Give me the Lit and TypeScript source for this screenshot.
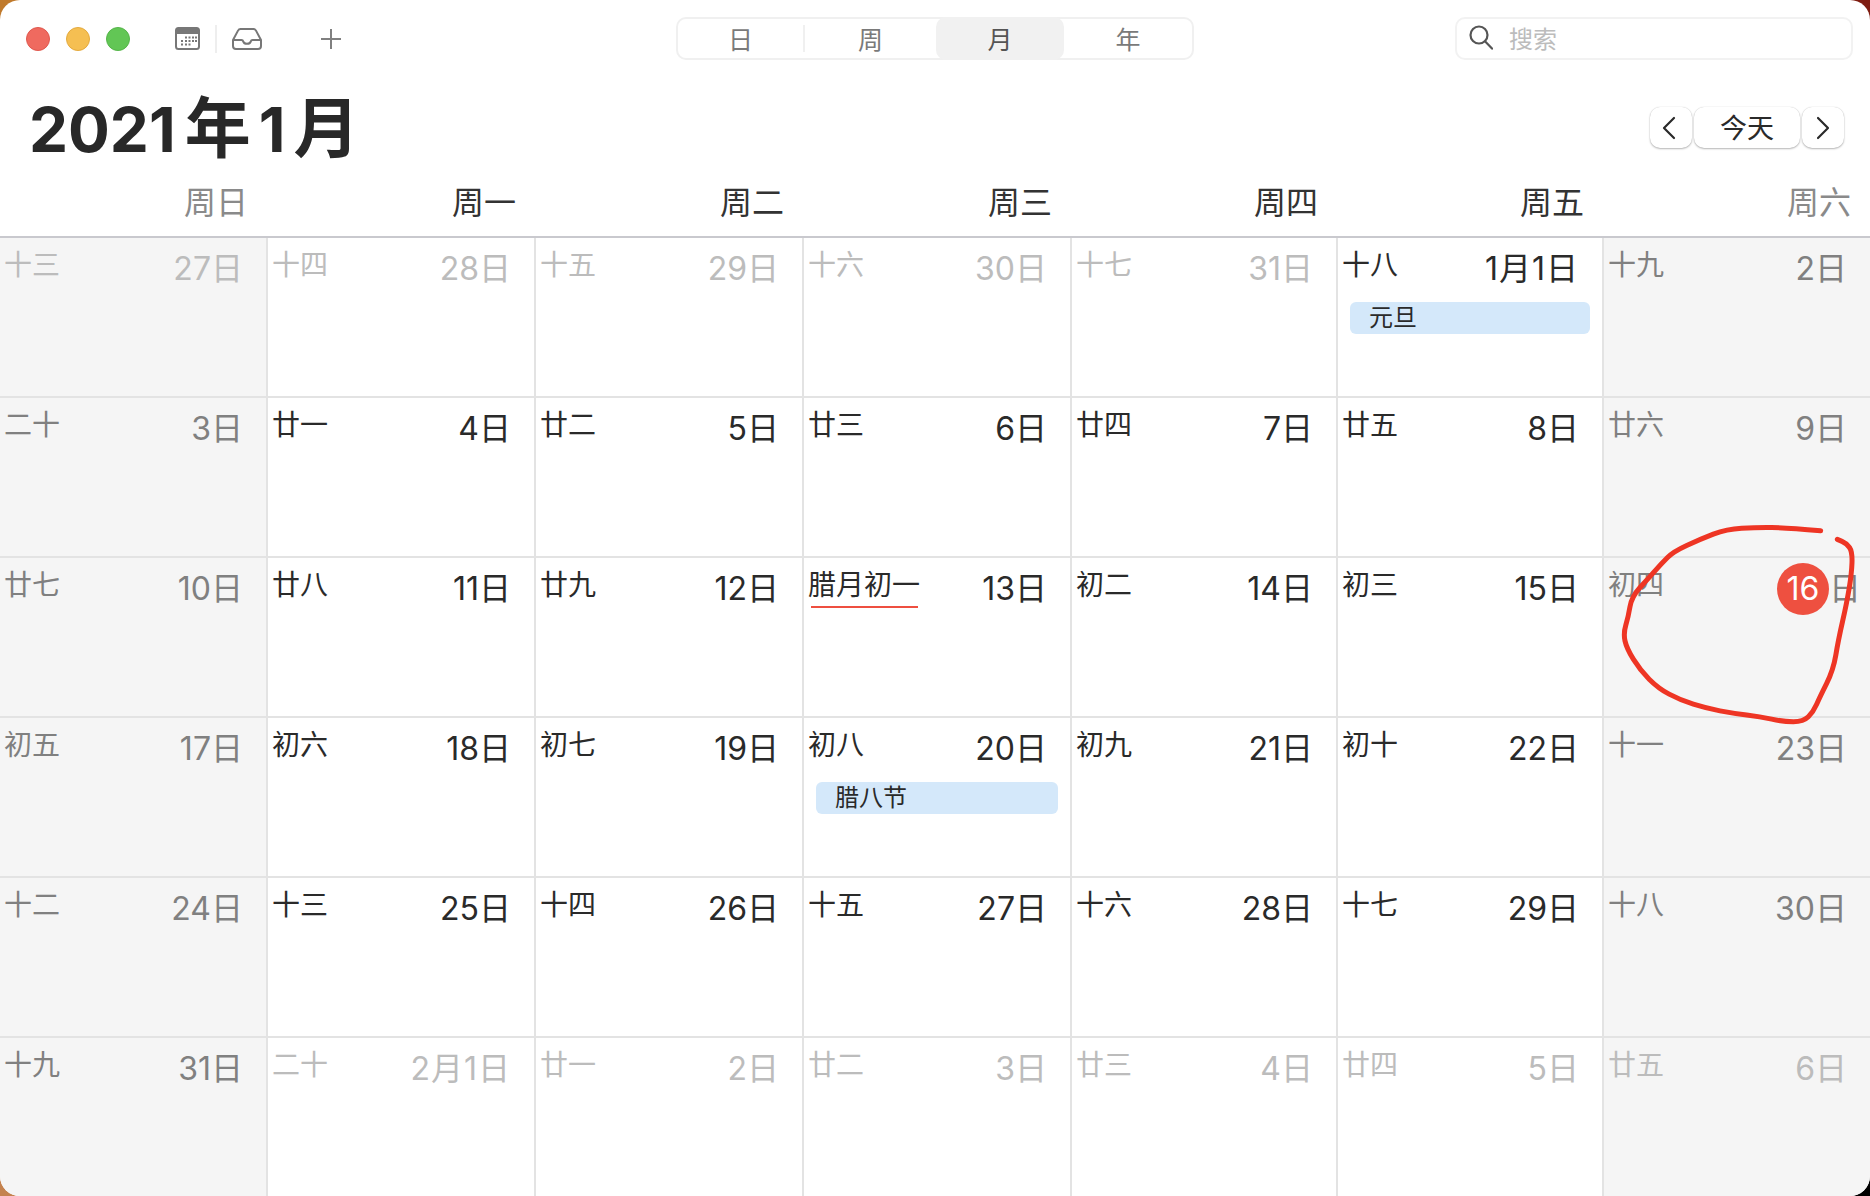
import { LitElement, html, css, svg } from 'lit';
import { customElement } from 'lit/decorators.js';

type Cell = {
  lunar: string;
  date: string;
  dim?: boolean;
  event?: string;
  today?: boolean;
  mark?: boolean;
};

const rows: Cell[][] = [
  [
    { lunar: '十三', date: '27日', dim: true },
    { lunar: '十四', date: '28日', dim: true },
    { lunar: '十五', date: '29日', dim: true },
    { lunar: '十六', date: '30日', dim: true },
    { lunar: '十七', date: '31日', dim: true },
    { lunar: '十八', date: '1月1日', event: '元旦' },
    { lunar: '十九', date: '2日' },
  ],
  [
    { lunar: '二十', date: '3日' },
    { lunar: '廿一', date: '4日' },
    { lunar: '廿二', date: '5日' },
    { lunar: '廿三', date: '6日' },
    { lunar: '廿四', date: '7日' },
    { lunar: '廿五', date: '8日' },
    { lunar: '廿六', date: '9日' },
  ],
  [
    { lunar: '廿七', date: '10日' },
    { lunar: '廿八', date: '11日' },
    { lunar: '廿九', date: '12日' },
    { lunar: '腊月初一', date: '13日', mark: true },
    { lunar: '初二', date: '14日' },
    { lunar: '初三', date: '15日' },
    { lunar: '初四', date: '16', today: true },
  ],
  [
    { lunar: '初五', date: '17日' },
    { lunar: '初六', date: '18日' },
    { lunar: '初七', date: '19日' },
    { lunar: '初八', date: '20日', event: '腊八节' },
    { lunar: '初九', date: '21日' },
    { lunar: '初十', date: '22日' },
    { lunar: '十一', date: '23日' },
  ],
  [
    { lunar: '十二', date: '24日' },
    { lunar: '十三', date: '25日' },
    { lunar: '十四', date: '26日' },
    { lunar: '十五', date: '27日' },
    { lunar: '十六', date: '28日' },
    { lunar: '十七', date: '29日' },
    { lunar: '十八', date: '30日' },
  ],
  [
    { lunar: '十九', date: '31日' },
    { lunar: '二十', date: '2月1日', dim: true },
    { lunar: '廿一', date: '2日', dim: true },
    { lunar: '廿二', date: '3日', dim: true },
    { lunar: '廿三', date: '4日', dim: true },
    { lunar: '廿四', date: '5日', dim: true },
    { lunar: '廿五', date: '6日', dim: true },
  ],
];

const weekdays = ['周日', '周一', '周二', '周三', '周四', '周五', '周六'];
const views = ['日', '周', '月', '年'];

// hand drawn ring, points read off the reference
const ring = [
  [692, 92], [590, 83], [500, 82], [410, 87], [330, 118], [250, 155], [215, 190], [175, 235],
  [125, 290], [115, 350], [100, 400], [110, 445], [150, 510], [205, 565], [270, 600], [350, 625],
  [430, 640], [510, 650], [580, 665], [640, 665], [670, 635], [690, 590], [730, 510], [745, 420],
  [770, 310], [785, 220], [787, 155], [770, 130], [742, 118],
];

function ringPath() {
  let d = `M${ring[0][0]} ${ring[0][1]}`;
  for (let i = 1; i < ring.length - 1; i++) {
    const mx = (ring[i][0] + ring[i + 1][0]) / 2;
    const my = (ring[i][1] + ring[i + 1][1]) / 2;
    d += ` Q${ring[i][0]} ${ring[i][1]} ${mx} ${my}`;
  }
  const last = ring[ring.length - 1];
  return d + ` L${last[0]} ${last[1]}`;
}

const calendarIcon = svg`
  <rect x="1" y="1" width="23" height="21" rx="2.5" fill="none" stroke="#777" stroke-width="2"/>
  <path d="M1 7V3.5A2.5 2.5 0 0 1 3.5 1h18A2.5 2.5 0 0 1 24 3.5V7z" fill="#777"/>
  <g fill="#777">
    <rect x="10" y="9.5" width="2" height="2"/><rect x="13.5" y="9.5" width="2" height="2"/><rect x="17" y="9.5" width="2" height="2"/><rect x="20" y="9.5" width="2" height="2"/>
    <rect x="6" y="13" width="2" height="2"/><rect x="10" y="13" width="2" height="2"/><rect x="13.5" y="13" width="2" height="2"/><rect x="17" y="13" width="2" height="2"/><rect x="20" y="13" width="2" height="2"/>
    <rect x="6" y="16.5" width="2" height="2"/><rect x="10" y="16.5" width="2" height="2"/><rect x="13.5" y="16.5" width="2" height="2"/>
  </g>`;

@customElement('app-root')
export class AppRoot extends LitElement {
  static styles = css`
    :host {
      display: block;
      width: 1870px;
      height: 1196px;
      font-family: Inter, 'Noto Sans CJK SC', sans-serif;
      color: #2a2a2a;
    }
    .wallpaper {
      position: relative;
      width: 1870px;
      height: 1196px;
      overflow: hidden;
      background: conic-gradient(#7e1c10 0 90deg, #000 90deg 180deg, #c4824e 180deg 270deg, #c07a2c 270deg 360deg);
    }
    .window {
      display: flex;
      flex-direction: column;
      height: 1196px;
      background: #fff;
      border-radius: 20px;
      overflow: hidden;
    }
    .toolbar {
      display: flex;
      align-items: center;
      height: 43px;
      padding: 17px 17px 0 0;
      flex: none;
    }
    .left {
      display: flex;
      align-items: center;
      width: 676px;
      padding-left: 26px;
      box-sizing: border-box;
    }
    .dot {
      width: 24px;
      height: 24px;
      border-radius: 50%;
      box-sizing: border-box;
      margin-right: 16px;
    }
    .red { background: #ef6a5f; border: 1px solid #e0584e; }
    .yellow { background: #f5bf52; border: 1px solid #e4aa3e; }
    .green { background: #62c655; border: 1px solid #55b549; }
    .cal { margin-left: 29px; }
    .sep {
      width: 2px;
      height: 28px;
      margin: 0 15px;
      background: #eee;
    }
    .plus { margin-left: 58px; }
    .segments {
      display: flex;
      width: 518px;
      height: 43px;
      box-sizing: border-box;
      border: 2px solid #f0f0f0;
      border-radius: 10px;
      font-size: 25px;
      color: #7a7a7a;
    }
    .segment {
      flex: 0 0 129px;
      display: flex;
      align-items: center;
      justify-content: center;
      margin: -2px 0;
      padding-bottom: 2px;
      box-sizing: border-box;
    }
    .segment:nth-child(2) { flex-basis: 131px; }
    .segment:nth-child(3) { flex-basis: 128px; }
    .segment:nth-child(4) { flex: 1; }
    .segment.active {
      background: #f1f1f1;
      border-radius: 10px;
      color: #555;
    }
    .segment.divided {
      flex-basis: 127px;
      border-right: 2px solid #f0f0f0;
      height: 27px;
      margin: auto 0;
    }
    .spacer { flex: 1; }
    .search {
      display: flex;
      align-items: center;
      gap: 16px;
      width: 398px;
      height: 43px;
      box-sizing: border-box;
      padding: 0 0 2px 12px;
      border: 2px solid #f2f2f2;
      border-radius: 10px;
      font-size: 24px;
      color: #bcbcbc;
    }
    .title-row {
      display: flex;
      align-items: center;
      justify-content: space-between;
      height: 86px;
      padding: 26px 26px 0 29px;
      flex: none;
    }
    h1 {
      margin: 0;
      font-size: 62px;
      font-weight: 700;
      line-height: 80px;
      color: #282828;
    }
    h1 span {
      font-size: 66px;
      margin: 0 8px 0 9px;
    }
    h1 span:last-child { margin: 0 0 0 8px; }
    .nav {
      display: flex;
      gap: 2px;
      margin-top: -3px;
    }
    .nav-btn {
      display: flex;
      align-items: center;
      justify-content: center;
      width: 42px;
      height: 41px;
      box-sizing: border-box;
      border-radius: 10px;
      background: #fff;
      box-shadow: 0 1px 2px rgba(0, 0, 0, 0.28), 0 0 1px rgba(0, 0, 0, 0.2);
      font-size: 27px;
    }
    .nav-btn.today { width: 106px; padding-bottom: 3px; }
    .nav-btn.prev { padding-right: 4px; }
    .weeks {
      display: grid;
      grid-template-columns: 266px 268px 268px 268px 266px 266px 268px;
      height: 66px;
      padding-top: 11px;
      flex: none;
      border-bottom: 2px solid #c9c9ce;
      box-sizing: border-box;
      font-size: 32px;
      line-height: 40px;
      color: #333;
    }
    .weeks div {
      text-align: right;
      padding-right: 18px;
    }
    .weeks div:last-child { padding-right: 19px; }
    .weeks .off { color: #8a8a8a; }
    .grid {
      flex: 1;
      display: grid;
      grid-template-columns: 266px 268px 268px 268px 266px 266px 268px;
      grid-template-rows: 158px repeat(5, 160px);
    }
    .cell {
      box-sizing: border-box;
      border-left: 2px solid #e3e3e3;
      border-top: 2px solid #e3e3e3;
      padding: 7px 23px 0 4px;
      font-size: 28px;
      min-width: 0;
    }
    .row-first { border-top: none; }
    .col-first { border-left: none; padding-left: 4px; }
    .weekend { background: #f5f5f5; color: #808080; }
    .dim { color: #bcbcbc; }
    .head {
      display: flex;
      justify-content: space-between;
      line-height: 40px;
    }
    .lunar { position: relative; }
    .mark::after {
      content: '';
      position: absolute;
      left: 3px;
      right: 2px;
      bottom: 1px;
      height: 2px;
      background: #ee4f40;
    }
    .date {
      padding-top: 4px;
      display: flex;
      align-items: center;
      font-size: 32px;
    }
    .date.long { letter-spacing: 1px; }
    .badge {
      display: flex;
      align-items: center;
      justify-content: center;
      width: 52px;
      height: 52px;
      margin: -8px 0;
      border-radius: 50%;
      background: #ee5040;
      color: #fff;
      font-size: 32px;
    }
    .today-date { margin-right: -14px; }
    .event {
      height: 32px;
      margin: 13px -11px 0 8px;
      padding-left: 19px;
      border-radius: 6px;
      background: #d4e8fa;
      font-size: 24px;
      line-height: 32px;
      color: #2a2a2a;
    }
    .ring {
      position: absolute;
      left: 1590px;
      top: 500px;
      width: 280px;
      height: 250px;
      pointer-events: none;
    }
  `;

  renderCell(cell: Cell, r: number, c: number) {
    const classes = ['cell'];
    if (r === 0) classes.push('row-first');
    if (c === 0) classes.push('col-first');
    if (c === 0 || c === 6) classes.push('weekend');
    if (cell.dim) classes.push('dim');
    return html`
      <div class=${classes.join(' ')}>
        <div class="head">
          <span class="lunar ${cell.mark ? 'mark' : ''}">${cell.lunar}</span>
          ${cell.today
            ? html`<span class="date today-date"><span class="badge">${cell.date}</span>日</span>`
            : html`<span class="date ${cell.date.includes('月') ? 'long' : ''}">${cell.date}</span>`}
        </div>
        ${cell.event ? html`<div class="event">${cell.event}</div>` : ''}
      </div>
    `;
  }

  render() {
    return html`
      <div class="wallpaper">
        <div class="window">
          <div class="toolbar">
            <div class="left">
              <div class="dot red"></div>
              <div class="dot yellow"></div>
              <div class="dot green"></div>
              <svg class="cal" width="25" height="23" viewBox="0 0 25 23">${calendarIcon}</svg>
              <div class="sep"></div>
              <svg width="30" height="22" viewBox="0 0 30 22" fill="none" stroke="#777" stroke-width="2" stroke-linejoin="round">
                <path d="M1 12 6 2.6A3 3 0 0 1 8.6 1h12.8A3 3 0 0 1 24 2.6L29 12v6a3 3 0 0 1-3 3H4a3 3 0 0 1-3-3z"/>
                <path d="M1 12h8.5c1 0 1.5.6 1.8 1.6.4 1.3 1.9 2.2 3.7 2.2s3.3-.9 3.7-2.2c.3-1 .8-1.6 1.8-1.6H29"/>
              </svg>
              <svg class="plus" width="22" height="22" viewBox="0 0 22 22" stroke="#808080" stroke-width="2">
                <path d="M11 1v20M1 11h20"/>
              </svg>
            </div>
            <div class="segments">
              ${views.map(
                (v, i) => html`<div class="segment ${i === 2 ? 'active' : ''} ${i === 0 ? 'divided' : ''}">${v}</div>`
              )}
            </div>
            <div class="spacer"></div>
            <div class="search">
              <svg width="24" height="25" viewBox="0 0 24 25" fill="none" stroke="#555" stroke-width="2.2" stroke-linecap="round">
                <circle cx="10" cy="10" r="8.5"/>
                <path d="M16.2 16.5 23 23.6"/>
              </svg>
              <span>搜索</span>
            </div>
          </div>
          <div class="title-row">
            <h1>2021<span>年</span>1<span>月</span></h1>
            <div class="nav">
              <div class="nav-btn prev">
                <svg width="14" height="24" viewBox="0 0 14 24" fill="none" stroke="#2a2a2a" stroke-width="2.2" stroke-linecap="round" stroke-linejoin="round"><path d="M12 2 2 12l10 10"/></svg>
              </div>
              <div class="nav-btn today">今天</div>
              <div class="nav-btn">
                <svg width="14" height="24" viewBox="0 0 14 24" fill="none" stroke="#2a2a2a" stroke-width="2.2" stroke-linecap="round" stroke-linejoin="round"><path d="m2 2 10 10L2 22"/></svg>
              </div>
            </div>
          </div>
          <div class="weeks">
            ${weekdays.map((w, i) => html`<div class=${i === 0 || i === 6 ? 'off' : ''}>${w}</div>`)}
          </div>
          <div class="grid">
            ${rows.map((row, r) => row.map((cell, c) => this.renderCell(cell, r, c)))}
          </div>
        </div>
        <svg class="ring" viewBox="0 0 840 750" fill="none" stroke="#ee3524" stroke-width="15" stroke-linecap="round" stroke-linejoin="round">
          <path d=${ringPath()}></path>
        </svg>
      </div>
    `;
  }
}
